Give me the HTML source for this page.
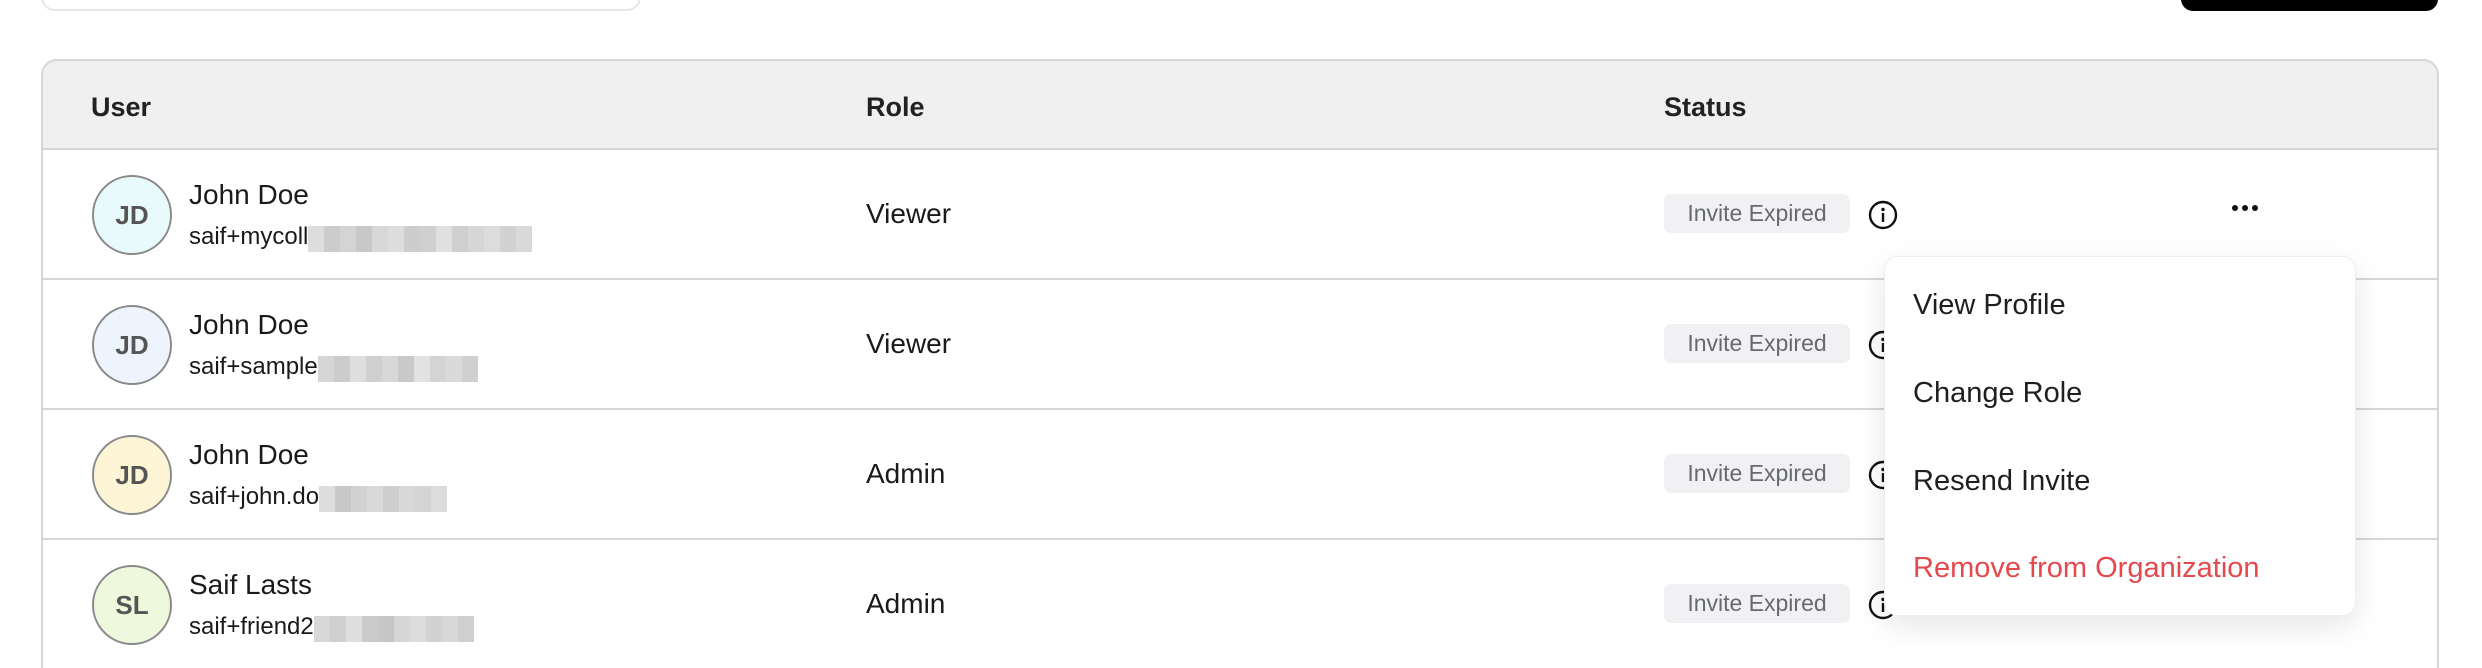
<!DOCTYPE html>
<html><head><meta charset="utf-8"><style>
*{margin:0;padding:0;box-sizing:border-box}
html,body{width:2482px;height:668px;overflow:hidden}
body{background:#fff;font-family:"Liberation Sans",sans-serif;color:#1a1a1a}
#wrap{position:relative;width:2482px;height:668px;overflow:hidden}
.abs{position:absolute}
.search{left:41px;top:-40px;width:600px;height:51px;border:2px solid #e6e6e6;border-radius:14px}
.btn{left:2181px;top:-40px;width:257px;height:51px;background:#000;border-radius:12px}
.table{left:41px;top:59px;width:2398px;height:640px;border:2px solid #d6d6d6;border-radius:16px;overflow:hidden}
.head{position:absolute;left:0;top:0;right:0;height:89px;background:#f0f0f0;border-bottom:2px solid #d6d6d6}
.th{position:absolute;top:31px;font-size:27px;font-weight:bold;color:#222}
.row{position:absolute;left:0;right:0;height:130px;border-bottom:2px solid #d6d6d6}
.av{position:absolute;left:49px;top:25px;width:80px;height:80px;border-radius:50%;border:2px solid #8a8a8a;display:flex;align-items:center;justify-content:center;font-size:26px;font-weight:bold;color:#555}
.name{position:absolute;left:146px;top:29px;font-size:28px}
.email{position:absolute;left:146px;top:72px;font-size:24px;display:flex;align-items:center}
.px{display:flex;height:26px;margin-top:4px}
.px span{width:16px;height:26px}
.role{position:absolute;left:823px;top:48px;font-size:28px}
.badge{position:absolute;left:1621px;top:44px;width:186px;height:39px;background:#f1f1f3;border-radius:7px;color:#666a70;font-size:23px;display:flex;align-items:center;justify-content:center}
.info{position:absolute;left:1825px;top:50px}
.menu{left:1884px;top:256px;width:472px;height:360px;background:#fff;border:1px solid #eee;border-radius:14px;box-shadow:0 10px 30px rgba(0,0,0,0.10)}
.mi{position:absolute;left:28px;font-size:29px;color:#1f1f1f}
</style></head><body><div id="wrap">
<div class="abs search"></div>
<div class="abs btn"></div>
<div class="abs table">
 <div class="head">
  <div class="th" style="left:48px">User</div>
  <div class="th" style="left:823px">Role</div>
  <div class="th" style="left:1621px">Status</div>
 </div>
 <div class="row" style="top:89px">
  <div class="av" style="background:#e8fafb">JD</div>
  <div class="name">John Doe</div>
  <div class="email">saif+mycoll<div class="px"><span style="background:#ddd"></span><span style="background:#ccc"></span><span style="background:#d4d4d4"></span><span style="background:#c8c8c8"></span><span style="background:#d8d8d8"></span><span style="background:#ddd"></span><span style="background:#cdcdcd"></span><span style="background:#d0d0d0"></span><span style="background:#e0e0e0"></span><span style="background:#cfcfcf"></span><span style="background:#d6d6d6"></span><span style="background:#dcdcdc"></span><span style="background:#d2d2d2"></span><span style="background:#d9d9d9"></span></div></div>
  <div class="role">Viewer</div>
  <div class="badge">Invite Expired</div>
  <svg class="info" width="30" height="30" viewBox="0 0 30 30"><circle cx="15" cy="15" r="13" fill="none" stroke="#111" stroke-width="2.4"/><circle cx="15" cy="9.5" r="1.7" fill="#111"/><rect x="13.8" y="13" width="2.4" height="9" fill="#111"/></svg>
  <svg class="abs" style="left:2188px;top:54px" width="28" height="8"><circle cx="4" cy="4" r="3" fill="#111"/><circle cx="14" cy="4" r="3" fill="#111"/><circle cx="24" cy="4" r="3" fill="#111"/></svg>
 </div>
 <div class="row" style="top:219px">
  <div class="av" style="background:#eef4fd">JD</div>
  <div class="name">John Doe</div>
  <div class="email">saif+sample<div class="px"><span style="background:#d6d6d6"></span><span style="background:#ccc"></span><span style="background:#dedede"></span><span style="background:#d0d0d0"></span><span style="background:#d8d8d8"></span><span style="background:#c9c9c9"></span><span style="background:#e2e2e2"></span><span style="background:#d4d4d4"></span><span style="background:#dadada"></span><span style="background:#d0d0d0"></span></div></div>
  <div class="role">Viewer</div>
  <div class="badge">Invite Expired</div>
  <svg class="info" width="30" height="30" viewBox="0 0 30 30"><circle cx="15" cy="15" r="13" fill="none" stroke="#111" stroke-width="2.4"/><circle cx="15" cy="9.5" r="1.7" fill="#111"/><rect x="13.8" y="13" width="2.4" height="9" fill="#111"/></svg>
 </div>
 <div class="row" style="top:349px">
  <div class="av" style="background:#fdf5d6">JD</div>
  <div class="name">John Doe</div>
  <div class="email">saif+john.do<div class="px"><span style="background:#ddd"></span><span style="background:#c8c8c8"></span><span style="background:#d2d2d2"></span><span style="background:#dadada"></span><span style="background:#cecece"></span><span style="background:#d8d8d8"></span><span style="background:#d4d4d4"></span><span style="background:#dcdcdc"></span></div></div>
  <div class="role">Admin</div>
  <div class="badge">Invite Expired</div>
  <svg class="info" width="30" height="30" viewBox="0 0 30 30"><circle cx="15" cy="15" r="13" fill="none" stroke="#111" stroke-width="2.4"/><circle cx="15" cy="9.5" r="1.7" fill="#111"/><rect x="13.8" y="13" width="2.4" height="9" fill="#111"/></svg>
 </div>
 <div class="row" style="top:479px">
  <div class="av" style="background:#eef8dd">SL</div>
  <div class="name">Saif Lasts</div>
  <div class="email">saif+friend2<div class="px"><span style="background:#d8d8d8"></span><span style="background:#d0d0d0"></span><span style="background:#dedede"></span><span style="background:#cacaca"></span><span style="background:#c6c6c6"></span><span style="background:#d6d6d6"></span><span style="background:#dcdcdc"></span><span style="background:#d2d2d2"></span><span style="background:#d8d8d8"></span><span style="background:#cfcfcf"></span></div></div>
  <div class="role">Admin</div>
  <div class="badge">Invite Expired</div>
  <svg class="info" width="30" height="30" viewBox="0 0 30 30"><circle cx="15" cy="15" r="13" fill="none" stroke="#111" stroke-width="2.4"/><circle cx="15" cy="9.5" r="1.7" fill="#111"/><rect x="13.8" y="13" width="2.4" height="9" fill="#111"/></svg>
 </div>
</div>
<div class="abs menu">
 <div class="mi" style="top:32px">View Profile</div>
 <div class="mi" style="top:120px">Change Role</div>
 <div class="mi" style="top:208px">Resend Invite</div>
 <div class="mi" style="top:295px;color:#e5484d">Remove from Organization</div>
</div>
</div></body></html>
